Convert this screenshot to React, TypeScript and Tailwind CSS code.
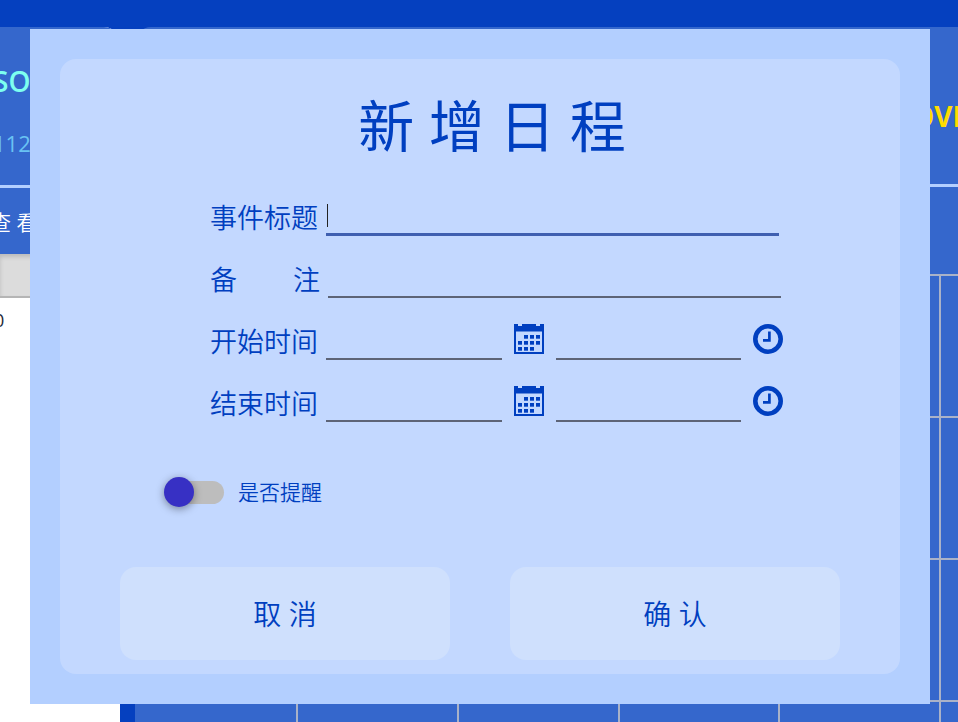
import { useState } from 'react'

const weeks = [0, 1, 2, 3]
const weekdays = [0, 1, 2, 3, 4, 5, 6]

const timeRows = [
  { id: 'start', label: '开始时间' },
  { id: 'end', label: '结束时间' }
]

const dots = [
  [10, 11], [16, 11], [22, 11],
  [4, 17], [10, 17], [16, 17], [22, 17],
  [4, 23], [10, 23], [16, 23]
]

const fieldLine = 'h-9 min-w-0 border-b-2 border-[#5d6477] bg-transparent px-1 text-xl text-gray-800 outline-none'
const labelText = 'shrink-0 whitespace-nowrap text-[27px] font-[350] leading-9'

function CalendarIcon() {
  return (
    <svg className="h-[30px] w-[30px]" viewBox="0 0 30 30" fill="currentColor" aria-hidden="true">
      <path d="M0 0h4v2h4V0h14v2h4V0h4v30H0zM2 7.5v20.5h26V7.5z" fillRule="evenodd" />
      {dots.map(([x, y]) => (
        <rect key={`${x}-${y}`} x={x} y={y} width="4" height="3.7" />
      ))}
    </svg>
  )
}

function ClockIcon() {
  return (
    <svg className="h-[30px] w-[30px]" viewBox="0 0 30 30" fill="none" stroke="currentColor" aria-hidden="true">
      <circle cx="15" cy="15" r="12.7" strokeWidth="4.6" />
      <path d="M16.4 7.5v8.8H10" strokeWidth="2.7" />
    </svg>
  )
}

function Sidebar() {
  return (
    <aside className="flex w-[120px] shrink-0 flex-col overflow-hidden rounded-tr-2xl bg-white">
      <div className="h-[161px] border-b-[3px] border-[#b3cfff] bg-[#3567cc] pt-8">
        <p className="-ml-[7px] text-[28px] font-semibold leading-[44px] text-[#7dfff0]">SO</p>
        <p className="-ml-[7px] mt-5 text-[22px] leading-10 text-[#69c3f3]">112</p>
      </div>
      <button className="h-[66px] bg-[#3567cc] pt-1 text-left text-[21px] font-[350] text-white">
        <span className="-ml-[10px]">查 看</span>
      </button>
      <div className="h-11 border-b-2 border-[#b5b5b5] bg-[#dcdcdc] shadow-[inset_0_3px_4px_rgba(0,0,0,0.15)]" />
      <p className="-ml-[6px] mt-[6px] text-lg leading-8 text-gray-800">0</p>
    </aside>
  )
}

function MonthView() {
  return (
    <main className="min-w-0 flex-1 overflow-hidden rounded-tl-2xl bg-[#3567cc]">
      <h1 className="h-[160px] border-b-[3px] border-[#b3cfff] pl-[777px] pt-[67px] text-[28px] font-bold leading-[44px] text-[#ffdc00]">
        OVE
      </h1>
      <div className="h-[87px]" />
      <table className="ml-px w-[1127px] table-fixed border-collapse">
        <tbody>
          {weeks.map((week) => (
            <tr key={week} className="h-[142px]">
              {weekdays.map((day) => (
                <td key={day} className="border-r-2 border-t-2 border-[#a9b2c8]" />
              ))}
            </tr>
          ))}
        </tbody>
      </table>
    </main>
  )
}

function EventDialog() {
  const [title, setTitle] = useState('')
  const [remind, setRemind] = useState(false)

  return (
    <div role="dialog" aria-labelledby="dialog-title" className="absolute left-[30px] right-7 top-[29px] bg-[#b3cfff] p-[30px]">
      <form className="rounded-2xl bg-[#c3d8ff] pb-[14px] pt-[26px] text-[#003fc0]" onSubmit={(e) => e.preventDefault()}>
        <h2 id="dialog-title" className="pl-6 text-center text-[56px] leading-[80px]">新 增 日 程</h2>

        <div className="ml-[150px] mt-[35px] flex w-[573px] flex-col gap-[26px]">
          <div className="flex gap-2">
            <label htmlFor="title" className={`w-[108px] ${labelText}`}>事件标题</label>
            <div className="relative w-[453px]">
              <input
                id="title"
                value={title}
                onChange={(e) => setTitle(e.target.value)}
                className="h-9 w-full border-b-[3px] border-[#3f5fb0] bg-transparent px-1 text-xl text-gray-800 outline-none"
              />
              {/* caret */}
              {title === '' && <span className="absolute left-px top-1 h-[23px] w-px bg-[#222]" />}
            </div>
          </div>

          <div className="flex gap-2">
            <label htmlFor="note" className={`flex w-[110px] justify-between ${labelText}`}>
              <span>备</span>
              <span>注</span>
            </label>
            <input id="note" className={`w-[453px] ${fieldLine}`} />
          </div>

          {timeRows.map((row) => (
            <div key={row.id} className="flex items-start">
              <label htmlFor={`${row.id}-date`} className={`w-[108px] ${labelText}`}>{row.label}</label>
              <input id={`${row.id}-date`} className={`ml-2 w-[176px] ${fieldLine}`} />
              <button type="button" aria-label="日期" className="mx-3"><CalendarIcon /></button>
              <input aria-label={row.label} className={`w-[185px] ${fieldLine}`} />
              <button type="button" aria-label="时间" className="ml-3"><ClockIcon /></button>
            </div>
          ))}
        </div>

        <div className="ml-[104px] mt-[55px] flex h-[30px] items-center">
          <input
            id="remind"
            type="checkbox"
            role="switch"
            checked={remind}
            onChange={(e) => setRemind(e.target.checked)}
            className="relative h-[30px] w-[60px] appearance-none before:absolute before:left-1 before:right-0 before:top-1 before:h-[23px] before:rounded-full before:bg-[#bdbdbd] after:absolute after:left-0 after:top-0 after:h-[30px] after:w-[30px] after:rounded-full after:bg-[#3730c4] after:shadow-[0_2px_8px_rgba(0,0,0,0.4)] after:transition-transform checked:after:translate-x-[30px]"
          />
          <label htmlFor="remind" className="ml-[14px] text-[21px] font-[350] leading-[30px]">是否提醒</label>
        </div>

        <div className="mt-[60px] grid grid-cols-2 gap-[60px] px-[60px]">
          <button type="button" className="h-[93px] rounded-2xl bg-[#cfe0fd] text-[28px] font-[350]">取 消</button>
          <button type="submit" className="h-[93px] rounded-2xl bg-[#cfe0fd] text-[28px] font-[350]">确 认</button>
        </div>
      </form>
    </div>
  )
}

export default function App() {
  return (
    <div className="relative flex h-screen flex-col overflow-hidden bg-[#0540bf] pt-[27px] font-['Open_Sans','Noto_Sans_CJK_SC',sans-serif]" lang="zh-CN">
      <div className="flex min-h-0 flex-1 gap-[15px]">
        <Sidebar />
        <MonthView />
      </div>
      <EventDialog />
    </div>
  )
}
